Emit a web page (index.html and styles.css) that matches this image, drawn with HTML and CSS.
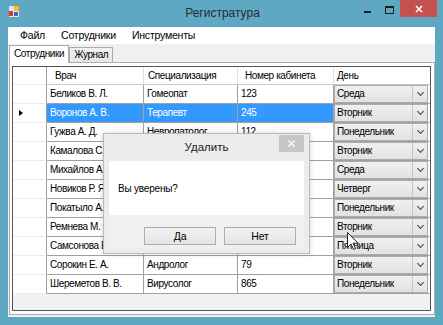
FILE: index.html
```html
<!DOCTYPE html>
<html lang="ru">

<head>
    <meta charset="UTF-8">
    <meta name="viewport" content="width=device-width, initial-scale=1.0">
    <title>Регистратура</title>
    <link rel="stylesheet" href="styles.css">
</head>

<body>
    <div class="window">
        <div class="titlebar">
            <div class="titlebar-left">
                <svg class="app-icon" width="12" height="13" viewBox="0 0 12 13">
                    <rect x="0.5" y="0.5" width="11" height="12" fill="#dce9f2" stroke="#7a96b0" />
                    <rect x="6" y="1" width="5" height="5" fill="#f2c21c" />
                    <rect x="1" y="6" width="4" height="5" fill="#d93a2e" />
                    <rect x="6" y="7" width="4" height="4" fill="#3a66c4" />
                </svg>
            </div>
            <div class="title">Регистратура</div>
            <div class="caption-buttons">
                <span class="cap-btn"><span class="min-glyph"></span></span>
                <span class="cap-btn"><span class="max-glyph"></span></span>
                <span class="cap-btn close">
                    <svg width="8" height="8" viewBox="0 0 8 8">
                        <path d="M1 1 L7 7 M7 1 L1 7" stroke="#fff" stroke-width="1.6" />
                    </svg>
                </span>
            </div>
        </div>

        <div class="client">
            <ul class="menu">
                <li>Файл</li>
                <li>Сотрудники</li>
                <li>Инструменты</li>
            </ul>

            <div class="tabs">
                <span class="tab active">Сотрудники</span>
                <span class="tab">Журнал</span>
            </div>

            <div class="tabpage">
                <div class="grid">
                    <div class="row head">
                        <div class="cell rh"></div>
                        <div class="cell h1">Врач</div>
                        <div class="cell h2">Специализация</div>
                        <div class="cell h3">Номер кабинета</div>
                        <div class="cell h4">День</div>
                    </div>
                    <div class="row">
                        <div class="cell rh"></div>
                        <div class="cell">Беликов В. Л.</div>
                        <div class="cell">Гомеопат</div>
                        <div class="cell">123</div>
                        <div class="cell day"><div class="combo"><span>Среда</span><i class="arrow"></i></div></div>
                    </div>
                    <div class="row selected">
                        <div class="cell rh"><span class="marker"></span></div>
                        <div class="cell">Воронов А. В.</div>
                        <div class="cell">Терапевт</div>
                        <div class="cell">245</div>
                        <div class="cell day"><div class="combo"><span>Вторник</span><i class="arrow"></i></div></div>
                    </div>
                    <div class="row">
                        <div class="cell rh"></div>
                        <div class="cell">Гужва А. Д.</div>
                        <div class="cell">Невропатолог</div>
                        <div class="cell">112</div>
                        <div class="cell day"><div class="combo"><span>Понедельник</span><i class="arrow"></i></div></div>
                    </div>
                    <div class="row">
                        <div class="cell rh"></div>
                        <div class="cell">Камалова С. А.</div>
                        <div class="cell">Окулист</div>
                        <div class="cell">204</div>
                        <div class="cell day"><div class="combo"><span>Вторник</span><i class="arrow"></i></div></div>
                    </div>
                    <div class="row">
                        <div class="cell rh"></div>
                        <div class="cell">Михайлов А. В.</div>
                        <div class="cell">Хирург</div>
                        <div class="cell">310</div>
                        <div class="cell day"><div class="combo"><span>Среда</span><i class="arrow"></i></div></div>
                    </div>
                    <div class="row">
                        <div class="cell rh"></div>
                        <div class="cell">Новиков Р. Я.</div>
                        <div class="cell">Кардиолог</div>
                        <div class="cell">56</div>
                        <div class="cell day"><div class="combo"><span>Четверг</span><i class="arrow"></i></div></div>
                    </div>
                    <div class="row">
                        <div class="cell rh"></div>
                        <div class="cell">Покатыло А. Н.</div>
                        <div class="cell">Лор</div>
                        <div class="cell">18</div>
                        <div class="cell day"><div class="combo"><span>Понедельник</span><i class="arrow"></i></div></div>
                    </div>
                    <div class="row">
                        <div class="cell rh"></div>
                        <div class="cell">Ремнева М. С.</div>
                        <div class="cell">Дерматолог</div>
                        <div class="cell">97</div>
                        <div class="cell day"><div class="combo"><span>Вторник</span><i class="arrow"></i></div></div>
                    </div>
                    <div class="row">
                        <div class="cell rh"></div>
                        <div class="cell">Самсонова Е. В.</div>
                        <div class="cell">Педиатр</div>
                        <div class="cell">41</div>
                        <div class="cell day"><div class="combo"><span>Пятница</span><i class="arrow"></i></div></div>
                    </div>
                    <div class="row">
                        <div class="cell rh"></div>
                        <div class="cell">Сорокин Е. А.</div>
                        <div class="cell">Андролог</div>
                        <div class="cell">79</div>
                        <div class="cell day"><div class="combo"><span>Вторник</span><i class="arrow"></i></div></div>
                    </div>
                    <div class="row">
                        <div class="cell rh"></div>
                        <div class="cell">Шереметов В. В.</div>
                        <div class="cell">Вирусолог</div>
                        <div class="cell">865</div>
                        <div class="cell day"><div class="combo"><span>Понедельник</span><i class="arrow"></i></div></div>
                    </div>
                </div>
            </div>
        </div>

        <div class="dialog">
            <div class="dialog-title">
                <span>Удалить</span>
                <span class="dialog-close">
                    <svg width="7" height="7" viewBox="0 0 7 7">
                        <path d="M0.5 0.5 L6.5 6.5 M6.5 0.5 L0.5 6.5" stroke="#fff" stroke-width="1.2" />
                    </svg>
                </span>
            </div>
            <div class="dialog-body">Вы уверены?</div>
            <div class="dialog-buttons">
                <button class="btn">Да</button>
                <button class="btn">Нет</button>
            </div>
        </div>

        <svg class="cursor" width="12" height="19" viewBox="0 0 12 19">
            <path d="M0.5 0.5 L0.5 15.5 L4 12 L6.5 17.5 L8.5 16.6 L6.1 11.2 L11 11.2 Z" fill="#fff" stroke="#222" />
        </svg>
    </div>
</body>

</html>
```

FILE: styles.css
```css
* {
    margin: 0;
    padding: 0;
    box-sizing: border-box;
}

body {
    width: 443px;
    height: 325px;
    overflow: hidden;
    font-family: "Liberation Sans", Arial, sans-serif;
    font-size: 10px;
    letter-spacing: -0.4px;
    color: #000;
}

.window {
    position: relative;
    width: 443px;
    height: 325px;
    background: #5fa8c4;
    padding: 0 8px 8px;
    display: flex;
    flex-direction: column;
}

/* title bar */
.titlebar {
    height: 27px;
    margin: 0 -8px;
    padding: 0 6px 0 8px;
    display: grid;
    grid-template-columns: 1fr auto 1fr;
}

.app-icon {
    display: block;
    margin-top: 5px;
}

.title {
    font-size: 12px;
    letter-spacing: 0;
    line-height: 26px;
    color: #2b2b2b;
}

.caption-buttons {
    display: flex;
    justify-content: flex-end;
    align-items: flex-start;
}

.cap-btn {
    width: 22px;
    height: 17px;
    display: flex;
    align-items: center;
    justify-content: center;
}

.cap-btn.close {
    width: 37px;
    background: #c75050;
}

.min-glyph {
    width: 7px;
    height: 2px;
    margin-top: 7px;
    background: #1e1e1e;
}

.max-glyph {
    width: 9px;
    height: 8px;
    border: 1px solid #1e1e1e;
    border-top-width: 2px;
    margin-top: 2px;
}

/* client area */
.client {
    flex: 1;
    background: #f0f0f0;
    display: flex;
    flex-direction: column;
}

.menu {
    height: 17px;
    background: #fff;
    list-style: none;
    display: flex;
    padding-left: 4px;
    font-size: 10.5px;
    letter-spacing: -0.2px;
}

.menu li {
    padding: 0 8px;
    line-height: 17px;
}

.tabs {
    height: 18px;
    padding: 1px 0 0 1px;
    display: flex;
    align-items: flex-end;
    position: relative;
    z-index: 1;
}

.tab {
    height: 15px;
    padding: 0 4px;
    border: 1px solid #acacac;
    border-bottom: none;
    background: linear-gradient(#f2f2f2, #e6e6e6);
    line-height: 14px;
}

.tab.active {
    height: 18px;
    margin-bottom: -1px;
    padding: 0 4px 0 4px;
    background: #fff;
    line-height: 16px;
}

.tabpage {
    flex: 1;
    margin: 0 0 2px 1px;
    border: 1px solid #acacac;
    background: #fff;
    padding: 3px 3px 3px 2px;
    display: flex;
}

/* data grid */
.grid {
    flex: 1;
    border: 1px solid #555;
    background: #f1f1f1;
}

.row {
    display: grid;
    grid-template-columns: 34px 97px 94px 96px 96px;
    height: 19px;
}

.row.head {
    height: 18px;
}

.cell {
    border-right: 1px solid #a0a0a0;
    border-bottom: 1px solid #a0a0a0;
    background: #fff;
    padding-left: 3px;
    line-height: 18px;
    white-space: nowrap;
    overflow: hidden;
}

.head .cell {
    line-height: 17px;
    border-right-color: #e3e3e3;
    border-bottom-color: #c8c8c8;
}

.head .h1 {
    padding-left: 8px;
}

.head .h2 {
    padding-left: 4px;
}

.head .h3 {
    padding-left: 7px;
}

.cell.rh {
    border-bottom-color: #ececec;
    border-right-color: #a0a0a0;
    padding: 0;
    position: relative;
}

.cell:last-child {
    border-right: none;
}

.cell.day {
    padding: 0 2px 0 0;
}

.selected .cell {
    background: #3399ff;
    color: #fff;
}

.selected .cell.rh,
.selected .cell.day {
    background: #fff;
    color: #000;
}

.marker {
    position: absolute;
    left: 6px;
    top: 6px;
    border-left: 4px solid #000;
    border-top: 3.5px solid transparent;
    border-bottom: 3.5px solid transparent;
}

.combo {
    height: 18px;
    border: 1px solid #acacac;
    background: linear-gradient(#f0f0f0, #e2e2e2);
    display: flex;
    line-height: 16px;
}

.combo span {
    flex: 1;
    padding-left: 2px;
}

.arrow {
    width: 15px;
    border-left: 1px solid #c4c4c4;
    display: flex;
    align-items: center;
    justify-content: center;
}

.arrow::after {
    content: "";
    width: 4px;
    height: 4px;
    border-right: 1.5px solid #444;
    border-bottom: 1.5px solid #444;
    transform: rotate(45deg);
    margin-top: -3px;
}

/* message box */
.dialog {
    position: absolute;
    left: 103px;
    top: 133px;
    width: 207px;
    height: 121px;
    background: #ececec;
    border: 1px solid #b9b9b9;
    padding: 0 5px 5px;
    display: flex;
    flex-direction: column;
    box-shadow: 0 0 6px rgba(0, 0, 0, 0.15);
}

.dialog-title {
    height: 27px;
    position: relative;
    text-align: center;
    font-size: 11.5px;
    letter-spacing: 0;
    line-height: 27px;
    color: #222;
}

.dialog-close {
    position: absolute;
    right: 0;
    top: 1px;
    width: 25px;
    height: 17px;
    background: #c7c7c7;
    display: flex;
    align-items: center;
    justify-content: center;
}

.dialog-body {
    height: 54px;
    background: #fff;
    padding-left: 9px;
    line-height: 56px;
    font-size: 10px;
    letter-spacing: -0.2px;
}

.dialog-buttons {
    flex: 1;
    background: #f0f0f0;
    display: flex;
    gap: 8px;
    padding: 12px 0 0 35px;
}

.btn {
    width: 72px;
    height: 18px;
    border: 1px solid #acacac;
    background: linear-gradient(#f2f2f2, #e4e4e4);
    font-family: "Liberation Sans", Arial, sans-serif;
    font-size: 10.5px;
    letter-spacing: -0.2px;
    color: #000;
}

.cursor {
    position: absolute;
    left: 347px;
    top: 232px;
}
```
